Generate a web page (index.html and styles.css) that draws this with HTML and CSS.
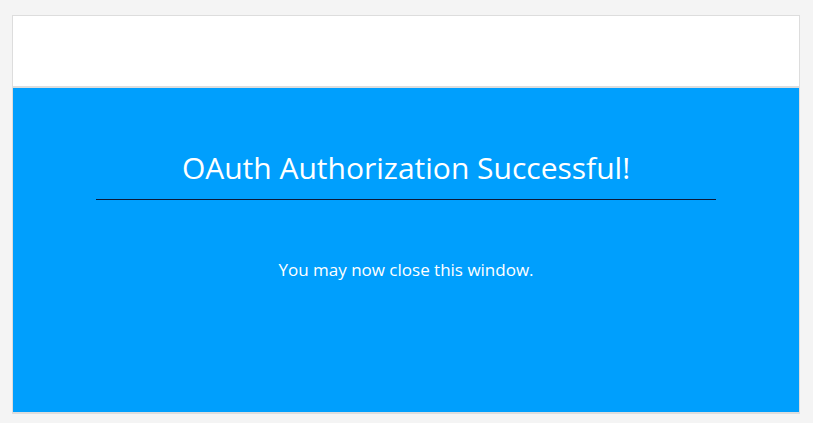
FILE: index.html
```html
<!DOCTYPE html>
<html>
<head>
<meta charset="utf-8">
<link rel="stylesheet" href="styles.css">
</head>
<body>
<div class="card">
  <div class="header"></div>
  <div class="content">
    <div class="inner">
      <h1 class="title">OAuth Authorization Successful!</h1>
      <hr class="rule">
      <p class="message">You may now close this window.</p>
    </div>
  </div>
</div>
</body>
</html>
```
FILE: styles.css
```css
html, body {
  margin: 0;
  padding: 0;
  background: #f4f4f4;
}
body {
  padding: 15px 13px 10px 12px;
  font-family: "Open Sans", "Noto Sans", sans-serif;
}
.card {
  border: 1px solid #dddddd;
  border-bottom-width: 2px;
  background: #ffffff;
}
.header {
  height: 70px;
  border-bottom: 2px solid #dddddd;
  background: #ffffff;
}
.content {
  background: #009ffd;
  height: 324px;
  display: flex;
  justify-content: center;
}
.inner {
  width: 620px;
  text-align: center;
  color: #ffffff;
  padding-top: 60px;
}
.title {
  margin: 0;
  font-weight: 400;
  font-size: 30px;
  line-height: 40px;
}
.rule {
  margin: 11px 0 0 0;
  border: 0;
  border-top: 1px solid #0a1a3a;
  height: 0;
}
.message {
  margin: 59px 0 0 0;
  font-size: 17px;
  line-height: 22px;
}
```
